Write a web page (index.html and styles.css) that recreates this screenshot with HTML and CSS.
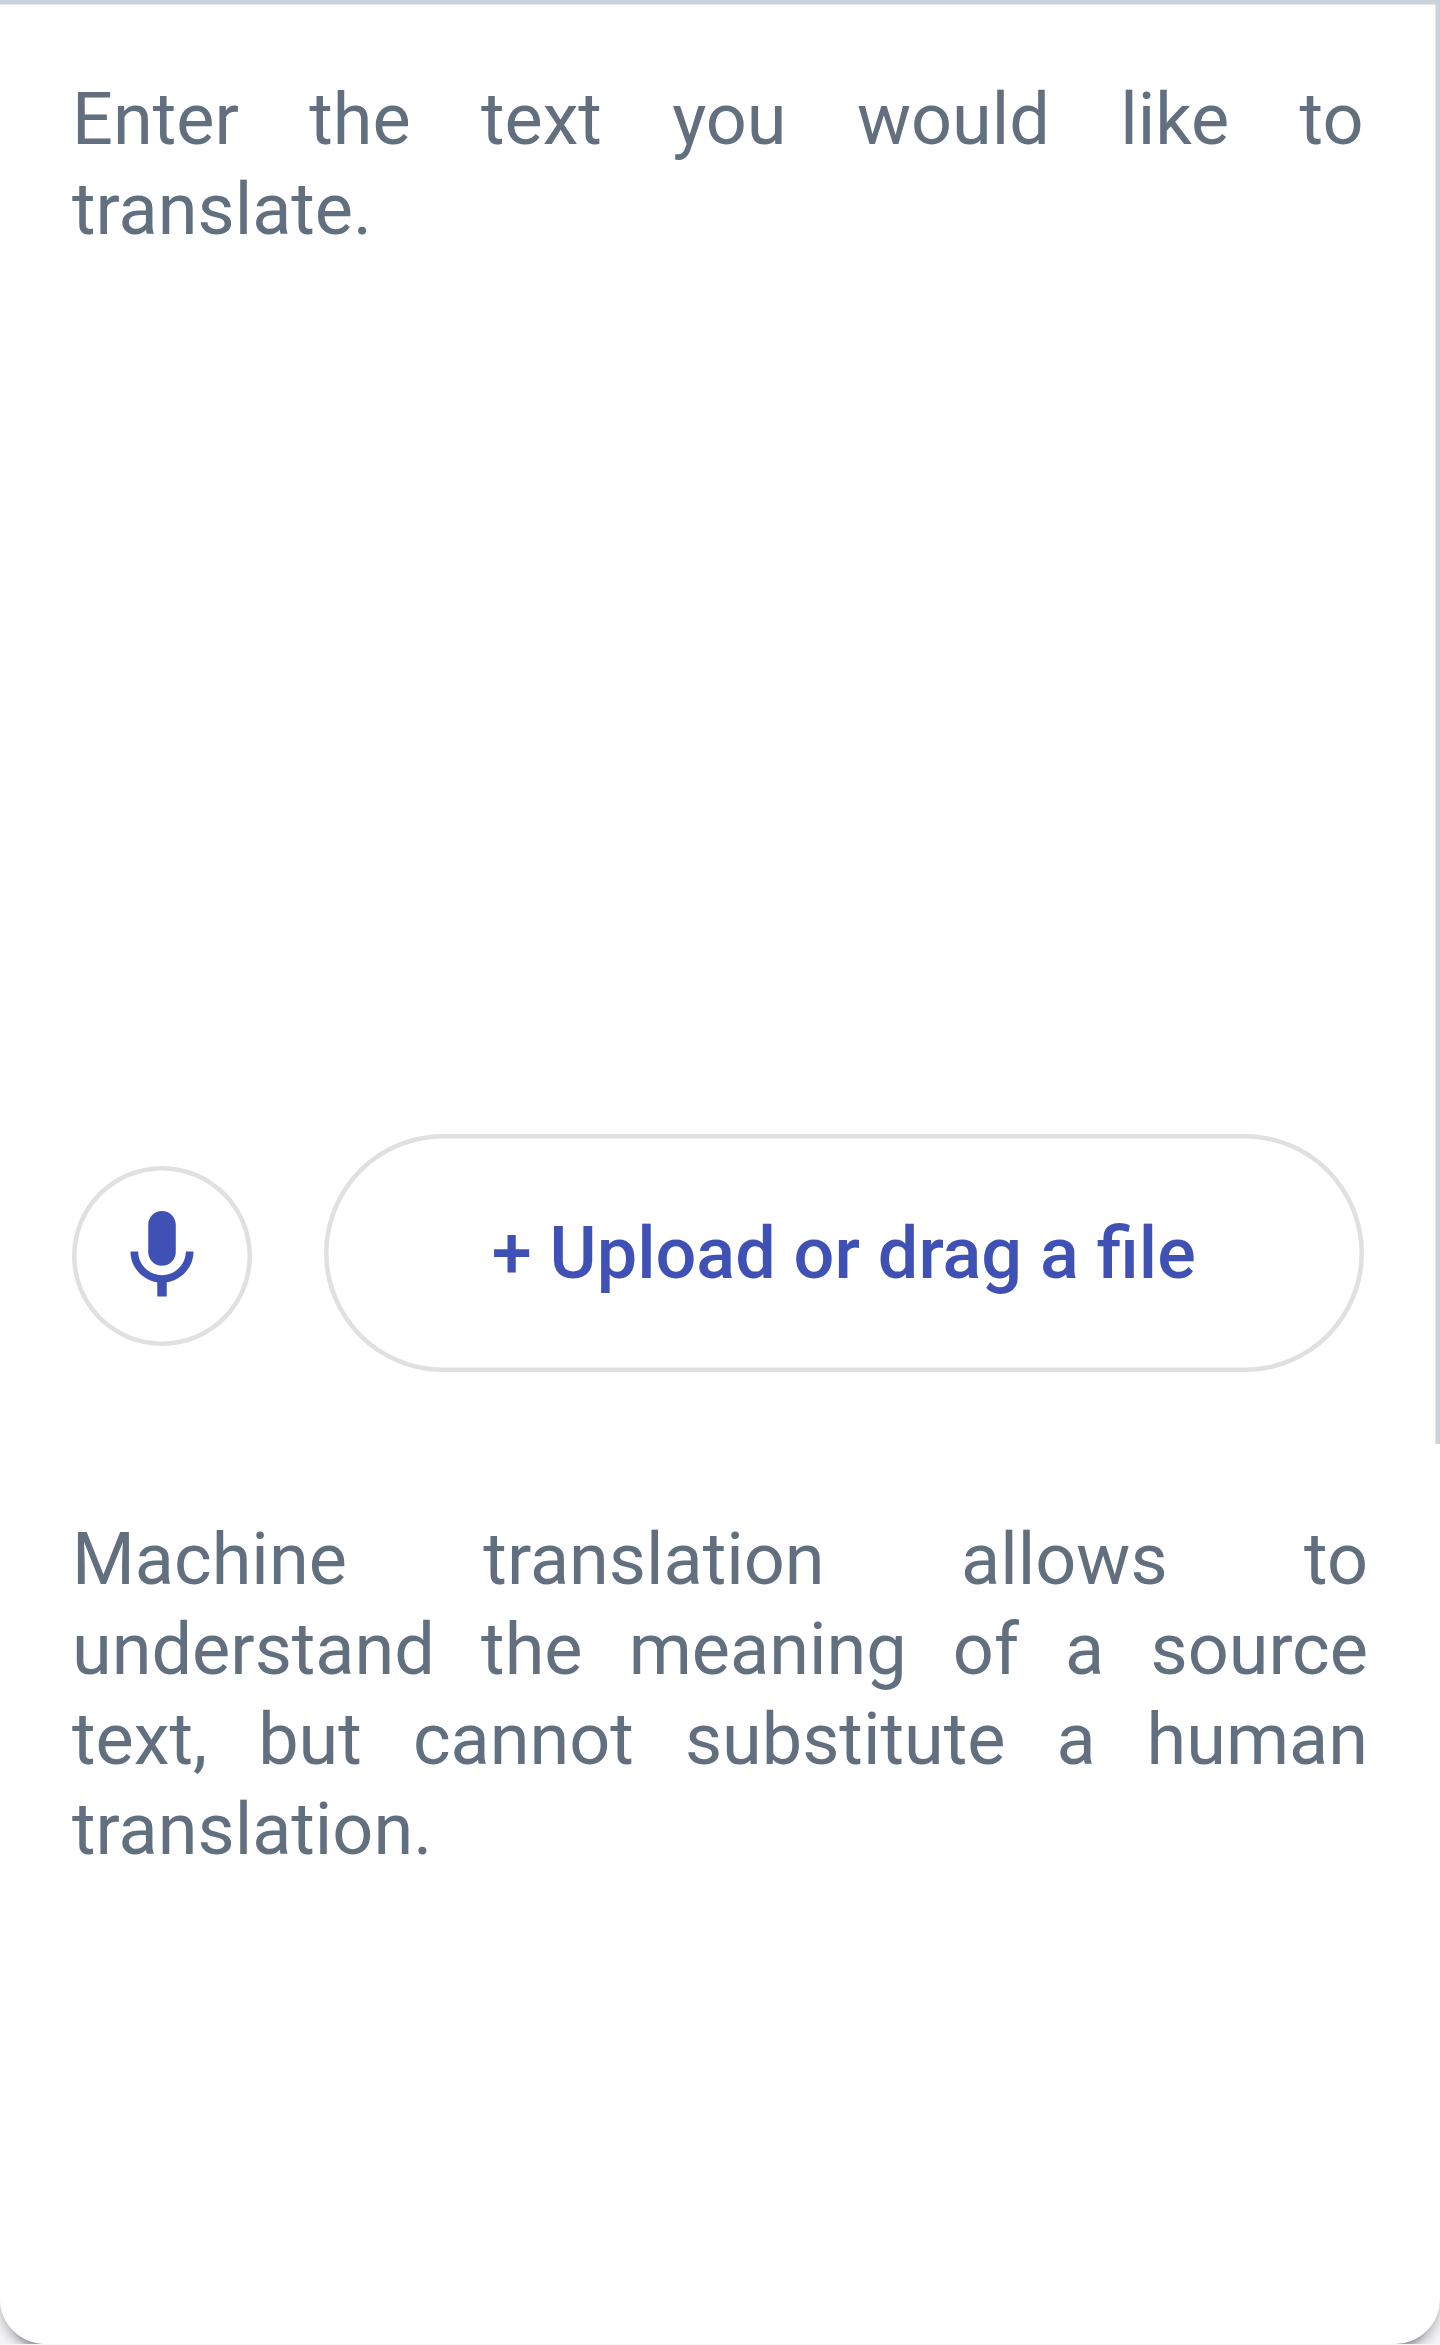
FILE: index.html
```html
<!DOCTYPE html>
<html lang="en">
<head>
<meta charset="utf-8">
<title>Translator</title>
<link rel="stylesheet" href="styles.css">
</head>
<body>
<main class="card">
  <section class="source">
    <p class="prompt">Enter the text you would like to translate.</p>
    <div class="actions">
      <button class="mic" aria-label="Speak">
        <svg class="mic-icon" viewBox="0 0 24 24"><path d="M12 14.150c1.700 0 3.060-1.370 3.060-3.060V5.060C15.060 3.360 13.700 2 12 2S8.940 3.360 8.940 5.060v6.030c0 1.690 1.360 3.060 3.060 3.060zM17.300 11c0 2.900-2.370 5.250-5.300 5.250S6.700 13.900 6.700 11H5c0 3.450 2.550 6.300 5.950 6.850V21h2.100v-3.150C16.450 17.300 19 14.450 19 11z"/></svg>
      </button>
      <button class="upload">+ Upload or drag a file</button>
    </div>
  </section>
  <section class="result">
    <p class="note">Machine translation allows to understand the meaning of a source text, but cannot substitute a human translation.</p>
  </section>
</main>
</body>
</html>
```

FILE: styles.css
```css
* { box-sizing: border-box; }
html { overflow: hidden; }
body { margin: 0; background: #f8f8fa; font-family: Roboto, sans-serif; }
.card {
  height: 2344px;
  background: #fff;
  border-radius: 0 0 45px 45px;
  box-shadow:
    0 13.5px 4.5px -9px rgba(0, 0, 0, .2),
    0 9px 9px rgba(0, 0, 0, .14),
    0 4.5px 22.5px rgba(0, 0, 0, .12);
}
.source {
  height: 1444px;
  padding: 75px 76.5px 72px 72px;
  box-shadow: inset -4.5px 4.5px 0 #cad2da;
  display: flex;
  flex-direction: column;
  justify-content: space-between;
}
.prompt, .note {
  margin: 0;
  color: #616f7f;
  font-size: 72px;
  line-height: 90px;
  text-align: justify;
}
.actions { display: flex; align-items: flex-end; gap: 72px; }
button {
  background: #fff;
  border: 0;
  box-shadow: inset 0 0 0 4.5px #e0e0e0;
  padding: 0;
  color: #3f51b5;
  font: 500 72px Roboto, sans-serif;
}
.mic {
  width: 180px;
  height: 180px;
  margin-bottom: 26.5px;
  border-radius: 50%;
  display: flex;
  align-items: center;
  justify-content: center;
}
.mic-icon { width: 108px; height: 108px; fill: currentColor; }
.upload { flex: 1; height: 238px; border-radius: 119px; }
.result { padding: 71px 72px; }
```
